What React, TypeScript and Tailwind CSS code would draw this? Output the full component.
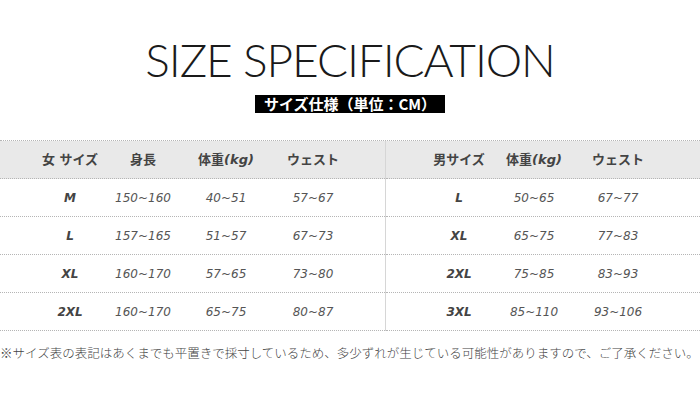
const women = [
  { size: 'M', height: '150~160', weight: '40~51', waist: '57~67' },
  { size: 'L', height: '157~165', weight: '51~57', waist: '67~73' },
  { size: 'XL', height: '160~170', weight: '57~65', waist: '73~80' },
  { size: '2XL', height: '160~170', weight: '65~75', waist: '80~87' },
];

const men = [
  { size: 'L', weight: '50~65', waist: '67~77' },
  { size: 'XL', weight: '65~75', waist: '77~83' },
  { size: '2XL', weight: '75~85', waist: '83~93' },
  { size: '3XL', weight: '85~110', waist: '93~106' },
];

const jp = "font-['DejaVu_Sans','Noto_Sans_CJK_JP',sans-serif]";
const cell = 'flex items-center justify-center';
const rowLine = 'h-[38px] border-b border-dotted border-[#b5b5b5]';

function Kg() {
  return (
    <span>
      体重<span className="italic">(kg)</span>
    </span>
  );
}

export default function App() {
  return (
    <div className="w-[700px] h-[420px] bg-white overflow-hidden">
      <div className="pt-[33px] flex justify-center">
        <h1 className="font-['Lato',sans-serif] font-light text-[46px] leading-[54px] text-[#1a1a1a] tracking-[-1.1px]">
          SIZE SPECIFICATION
        </h1>
      </div>
      <div className="mt-[8px] flex justify-center">
        <div className="w-[190px] h-[18px] bg-black text-white flex items-center justify-center font-['Noto_Sans_CJK_JP',sans-serif] font-bold text-[15px] leading-[18px]">
          サイズ仕様（単位：CM）
        </div>
      </div>

      <div className={`mt-[27px] flex border-t border-dotted border-[#b5b5b5] text-[#555] ${jp}`}>
        <div className="w-[386px] border-r border-[#d6d6d6]">
          <div className={`flex bg-[#e9e9e9] pl-[30px] ${rowLine} font-bold text-[13px] text-[#444]`}>
            <div className={`${cell} w-[80px]`}>女 サイズ</div>
            <div className={`${cell} w-[66px]`}>身長</div>
            <div className={`${cell} w-[100px]`}><Kg /></div>
            <div className={`${cell} w-[74px]`}>ウェスト</div>
          </div>
          {women.map((r) => (
            <div key={r.size} className={`flex pl-[30px] ${rowLine} italic text-[12px]`}>
              <div className={`${cell} w-[80px] font-bold text-[#444]`}>{r.size}</div>
              <div className={`${cell} w-[66px]`}>{r.height}</div>
              <div className={`${cell} w-[100px]`}>{r.weight}</div>
              <div className={`${cell} w-[74px]`}>{r.waist}</div>
            </div>
          ))}
        </div>
        <div className="flex-1">
          <div className={`flex bg-[#e9e9e9] pl-[34px] ${rowLine} font-bold text-[13px] text-[#444]`}>
            <div className={`${cell} w-[78px]`}>男サイズ</div>
            <div className={`${cell} w-[72px]`}><Kg /></div>
            <div className={`${cell} w-[96px]`}>ウェスト</div>
          </div>
          {men.map((r) => (
            <div key={r.size} className={`flex pl-[34px] ${rowLine} italic text-[12px]`}>
              <div className={`${cell} w-[78px] font-bold text-[#444]`}>{r.size}</div>
              <div className={`${cell} w-[72px]`}>{r.weight}</div>
              <div className={`${cell} w-[96px]`}>{r.waist}</div>
            </div>
          ))}
        </div>
      </div>

      <p className="mt-[14px] whitespace-nowrap font-['Noto_Sans_CJK_JP',sans-serif] font-light text-[12.5px] leading-[15px] text-[#444]">
        ※サイズ表の表記はあくまでも平置きで採寸しているため、多少ずれが生じている可能性がありますので、ご了承ください。
      </p>
    </div>
  );
}
